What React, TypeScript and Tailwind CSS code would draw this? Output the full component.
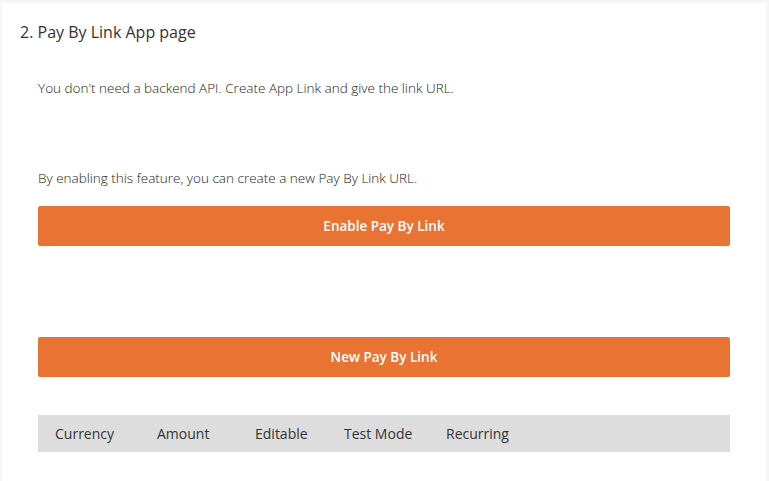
export default function App() {
  const cols = [
    { label: "Currency", w: "w-[102px]" },
    { label: "Amount", w: "w-[98px]" },
    { label: "Editable", w: "w-[89px]" },
    { label: "Test Mode", w: "w-[102px]" },
    { label: "Recurring", w: "flex-1" },
  ];

  return (
    <div className="min-h-[481px] bg-[#f5f5f5] pt-[3px] pl-[2px] pr-[3px] font-['Open_Sans',sans-serif] text-[#333]">
      <div className="bg-white min-h-[478px] pb-8">
        {/* Titel */}
        <h2 className="pt-[18px] pl-[18px] text-[16px] leading-[22px] text-[#333]">
          2. Pay By Link App page
        </h2>

        <div className="pl-[36px] pr-[36px]">
          <p className="mt-[36px] text-[13.5px] leading-[18px] font-light text-[#222]">
            You don't need a backend API. Create App Link and give the link URL.
          </p>

          <p className="mt-[72px] text-[13.5px] leading-[18px] font-light text-[#222]">
            By enabling this feature, you can create a new Pay By Link URL.
          </p>

          <button className="mt-[19px] w-full h-[40px] rounded-[2px] bg-[#e97333] text-white text-[13.5px] font-semibold">
            Enable Pay By Link
          </button>

          <button className="mt-[91px] w-full h-[40px] rounded-[2px] bg-[#e97333] text-white text-[13.5px] font-semibold">
            New Pay By Link
          </button>

          {/* Tabel header */}
          <div className="mt-[38px] h-[37px] bg-[#dddddd] flex items-center text-[14px]">
            {cols.map((c) => (
              <div key={c.label} className={`${c.w} pl-[17px]`}>
                {c.label}
              </div>
            ))}
          </div>
        </div>
      </div>
    </div>
  );
}
